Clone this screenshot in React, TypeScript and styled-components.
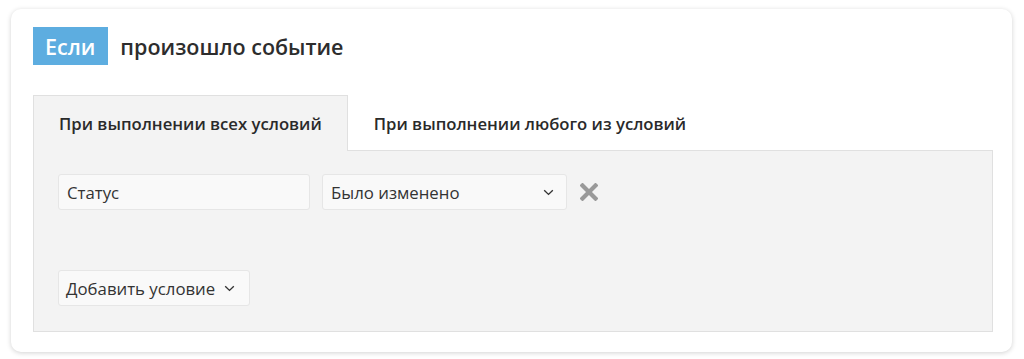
import React from "react";
import styled, { createGlobalStyle } from "styled-components";

const GlobalStyle = createGlobalStyle`
  html, body {
    margin: 0;
    padding: 0;
    background: #ffffff;
    font-family: "Open Sans", "Noto Sans", sans-serif;
    color: #333333;
  }
`;

const Page = styled.div`
  padding: 9px 12px 8px 11px;
`;

const Card = styled.div`
  background: #fff;
  border-radius: 10px;
  box-shadow: 0 1px 5px rgba(0, 0, 0, 0.18);
  padding: 18px 19px 20px 22px;
`;

const Heading = styled.div`
  display: flex;
  align-items: center;
  gap: 12px;
`;

const Badge = styled.span`
  display: inline-flex;
  align-items: center;
  height: 38px;
  padding: 0 13px 0 12px;
  background: #5dade0;
  color: #fff;
  font-size: 21.5px;
  font-weight: 600;
`;

const Title = styled.span`
  font-size: 21.5px;
  font-weight: 600;
  color: #2d2d2d;
`;

const Tabs = styled.div`
  display: flex;
  margin-top: 30px;
  position: relative;
  z-index: 1;
`;

const Tab = styled.div<{ $active?: boolean }>`
  display: flex;
  align-items: center;
  padding: 0 25px;
  font-size: 16.7px;
  font-weight: 600;
  color: #2a2a2a;
  background: ${(p) => (p.$active ? "#f3f3f3" : "#fff")};
  border: 1px solid ${(p) => (p.$active ? "#e0e0e0" : "transparent")};
  border-bottom: none;
  margin-bottom: -1px;
  height: ${(p) => (p.$active ? "55px" : "54px")};
`;

const Panel = styled.div`
  background: #f3f3f3;
  border: 1px solid #e0e0e0;
  padding: 23px 24px 25px 24px;
  display: flex;
  flex-direction: column;
  align-items: flex-start;
  gap: 60px;
`;

const Row = styled.div`
  display: flex;
  align-items: center;
`;

const Field = styled.div<{ $width: number }>`
  width: ${(p) => p.$width}px;
  height: 36px;
  box-sizing: border-box;
  background: #f9f9f9;
  border: 1px solid #e6e6e6;
  border-radius: 3px;
  display: flex;
  align-items: center;
  justify-content: space-between;
  padding: 0 12px 0 8px;
  font-size: 16.8px;
  color: #333;
  margin-right: 12px;
`;

const Remove = styled.span`
  display: inline-flex;
  margin-left: 1px;
`;

const AddButton = styled.div`
  height: 36px;
  box-sizing: border-box;
  background: #f9f9f9;
  border: 1px solid #e6e6e6;
  border-radius: 3px;
  display: flex;
  align-items: center;
  gap: 9px;
  padding: 0 14px 0 7px;
  font-size: 16.8px;
  color: #333;
`;

const Chevron = () => (
  <svg width="11" height="7" viewBox="0 0 11 7">
    <path d="M1.2 1.3l4.3 4.1 4.3-4.1" fill="none" stroke="#333" strokeWidth="1.4" />
  </svg>
);

const Cross = () => (
  <svg width="18" height="18" viewBox="0 0 18 18">
    <path d="M2.5 2.5l13 13M15.5 2.5l-13 13" stroke="#999" strokeWidth="4.2" strokeLinecap="square" />
  </svg>
);

export default function App() {
  return (
    <Page>
      <GlobalStyle />
      <Card>
        <Heading>
          <Badge>Если</Badge>
          <Title>произошло событие</Title>
        </Heading>
        <Tabs>
          <Tab $active>При выполнении всех условий</Tab>
          <Tab>При выполнении любого из условий</Tab>
        </Tabs>
        <Panel>
          <Row>
            <Field $width={252}>Статус</Field>
            <Field $width={245}>
              Было изменено
              <Chevron />
            </Field>
            <Remove>
              <Cross />
            </Remove>
          </Row>
          <AddButton>
            Добавить условие
            <Chevron />
          </AddButton>
        </Panel>
      </Card>
    </Page>
  );
}
